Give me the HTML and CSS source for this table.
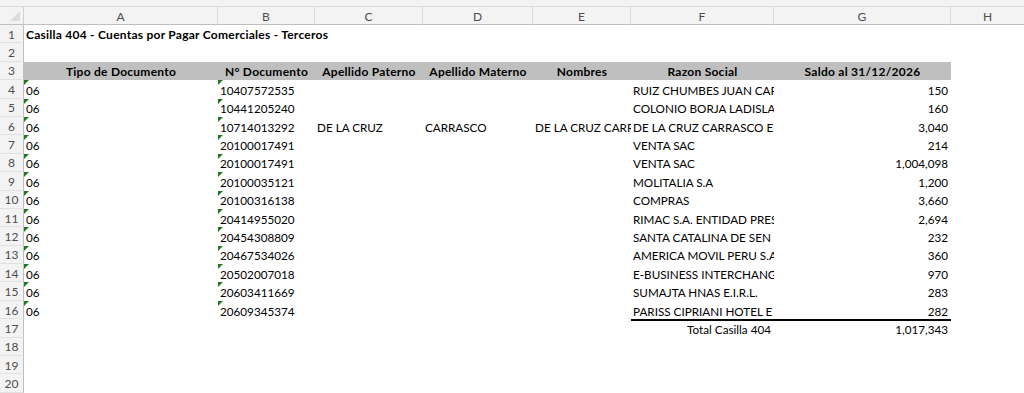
FILE: index.html
```html
<!DOCTYPE html>
<html lang="es">
<head>
<meta charset="utf-8">
<title>Casilla 404</title>
<link rel="stylesheet" href="styles.css">
</head>
<body>
<div class="strip"></div>
<div class="sheet">
  <div class="corner"><span class="tri"></span></div>
  <div class="ch">A</div><div class="ch">B</div><div class="ch">C</div><div class="ch">D</div><div class="ch">E</div><div class="ch">F</div><div class="ch">G</div><div class="ch">H</div>

  <div class="rh">1</div><div class="c title">Casilla 404 - Cuentas por Pagar Comerciales - Terceros</div><div class="c"></div><div class="c"></div><div class="c"></div><div class="c"></div><div class="c"></div><div class="c"></div><div class="c"></div>

  <div class="rh">2</div><div class="c"></div><div class="c"></div><div class="c"></div><div class="c"></div><div class="c"></div><div class="c"></div><div class="c"></div><div class="c"></div>

  <div class="rh">3</div><div class="c hd">Tipo de Documento</div><div class="c hd">N° Documento</div><div class="c hd">Apellido Paterno</div><div class="c hd">Apellido Materno</div><div class="c hd">Nombres</div><div class="c hd">Razon Social</div><div class="c hd">Saldo al 31/12/2026</div><div class="c"></div>

  <div class="rh">4</div><div class="c tx">06</div><div class="c tx">10407572535</div><div class="c"></div><div class="c"></div><div class="c"></div><div class="c">RUIZ CHUMBES JUAN CAR</div><div class="c num">150</div><div class="c"></div>

  <div class="rh">5</div><div class="c tx">06</div><div class="c tx">10441205240</div><div class="c"></div><div class="c"></div><div class="c"></div><div class="c">COLONIO BORJA LADISLA</div><div class="c num">160</div><div class="c"></div>

  <div class="rh">6</div><div class="c tx">06</div><div class="c tx">10714013292</div><div class="c">DE LA CRUZ</div><div class="c">CARRASCO</div><div class="c">DE LA CRUZ CARR</div><div class="c">DE LA CRUZ CARRASCO ED</div><div class="c num">3,040</div><div class="c"></div>

  <div class="rh">7</div><div class="c tx">06</div><div class="c tx">20100017491</div><div class="c"></div><div class="c"></div><div class="c"></div><div class="c">VENTA SAC</div><div class="c num">214</div><div class="c"></div>

  <div class="rh">8</div><div class="c tx">06</div><div class="c tx">20100017491</div><div class="c"></div><div class="c"></div><div class="c"></div><div class="c">VENTA SAC</div><div class="c num">1,004,098</div><div class="c"></div>

  <div class="rh">9</div><div class="c tx">06</div><div class="c tx">20100035121</div><div class="c"></div><div class="c"></div><div class="c"></div><div class="c">MOLITALIA S.A</div><div class="c num">1,200</div><div class="c"></div>

  <div class="rh">10</div><div class="c tx">06</div><div class="c tx">20100316138</div><div class="c"></div><div class="c"></div><div class="c"></div><div class="c">COMPRAS</div><div class="c num">3,660</div><div class="c"></div>

  <div class="rh">11</div><div class="c tx">06</div><div class="c tx">20414955020</div><div class="c"></div><div class="c"></div><div class="c"></div><div class="c">RIMAC S.A. ENTIDAD PRES</div><div class="c num">2,694</div><div class="c"></div>

  <div class="rh">12</div><div class="c tx">06</div><div class="c tx">20454308809</div><div class="c"></div><div class="c"></div><div class="c"></div><div class="c">SANTA CATALINA DE SEN</div><div class="c num">232</div><div class="c"></div>

  <div class="rh">13</div><div class="c tx">06</div><div class="c tx">20467534026</div><div class="c"></div><div class="c"></div><div class="c"></div><div class="c">AMERICA MOVIL PERU S.A</div><div class="c num">360</div><div class="c"></div>

  <div class="rh">14</div><div class="c tx">06</div><div class="c tx">20502007018</div><div class="c"></div><div class="c"></div><div class="c"></div><div class="c">E-BUSINESS INTERCHANG</div><div class="c num">970</div><div class="c"></div>

  <div class="rh">15</div><div class="c tx">06</div><div class="c tx">20603411669</div><div class="c"></div><div class="c"></div><div class="c"></div><div class="c">SUMAJTA HNAS E.I.R.L.</div><div class="c num">283</div><div class="c"></div>

  <div class="rh">16</div><div class="c tx">06</div><div class="c tx">20609345374</div><div class="c"></div><div class="c"></div><div class="c"></div><div class="c">PARISS CIPRIANI HOTEL E</div><div class="c num">282</div><div class="c"></div>

  <div class="rh">17</div><div class="c"></div><div class="c"></div><div class="c"></div><div class="c"></div><div class="c"></div><div class="c num total">Total Casilla 404</div><div class="c num total">1,017,343</div><div class="c"></div>

  <div class="rh">18</div><div class="c"></div><div class="c"></div><div class="c"></div><div class="c"></div><div class="c"></div><div class="c"></div><div class="c"></div><div class="c"></div>

  <div class="rh">19</div><div class="c"></div><div class="c"></div><div class="c"></div><div class="c"></div><div class="c"></div><div class="c"></div><div class="c"></div><div class="c"></div>

  <div class="rh">20</div><div class="c"></div><div class="c"></div><div class="c"></div><div class="c"></div><div class="c"></div><div class="c"></div><div class="c"></div><div class="c"></div>
</div>
</body>
</html>
```

FILE: styles.css
```css
html, body {
  margin: 0;
  padding: 0;
  overflow: hidden;
  background: #ffffff;
}

body {
  font-family: Lato, "Open Sans", sans-serif;
  font-size: 11.7px;
  color: #000000;
}

.strip {
  height: 6px;
  background: #f3f3f3;
  border-bottom: 1px solid #dcdcdc;
}

.sheet {
  display: grid;
  grid-template-columns: 24px 194px 97px 108px 110px 98px 143px 177px 74px;
  grid-template-rows: 18px repeat(20, 18.4px);
  width: 1025px;
}

.corner {
  position: relative;
  background: #f3f3f3;
  border-right: 1px solid #d0d0d0;
  border-bottom: 1px solid #bfbfbf;
  box-sizing: border-box;
}

.tri {
  position: absolute;
  right: 3px;
  bottom: 3px;
  width: 0;
  height: 0;
  border-left: 10px solid transparent;
  border-bottom: 10px solid #dcdcdc;
}

.ch {
  display: flex;
  align-items: center;
  justify-content: center;
  background: #f3f3f3;
  color: #4d4d4d;
  font-size: 12px;
  border-right: 1px solid #dadada;
  border-bottom: 1px solid #bfbfbf;
  box-sizing: border-box;
  padding-top: 1px;
}

.rh {
  display: flex;
  align-items: center;
  justify-content: center;
  background: #f3f3f3;
  color: #4d4d4d;
  font-size: 12px;
  border-right: 1px solid #bfbfbf;
  border-bottom: 1px solid #e1e1e1;
  box-sizing: border-box;
  padding-top: 1px;
}

.c {
  position: relative;
  display: flex;
  align-items: center;
  padding: 1px 3px 0 2px;
  white-space: nowrap;
  overflow: hidden;
  box-sizing: border-box;
}

.title {
  overflow: visible;
  font-weight: 700;
  font-size: 12px;
  letter-spacing: 0.25px;
  z-index: 1;
}

.hd {
  background: #bfbfbf;
  font-weight: 700;
  font-size: 12px;
  letter-spacing: 0.25px;
  justify-content: center;
  padding-left: 0;
  padding-right: 0;
}

.num {
  justify-content: flex-end;
}

.total {
  border-top: 2px solid #000000;
  padding-top: 0;
}

.tx::before {
  content: "";
  position: absolute;
  left: 0;
  top: 0;
  width: 0;
  height: 0;
  border-top: 5px solid #1f7a1f;
  border-right: 5px solid transparent;
}
```
